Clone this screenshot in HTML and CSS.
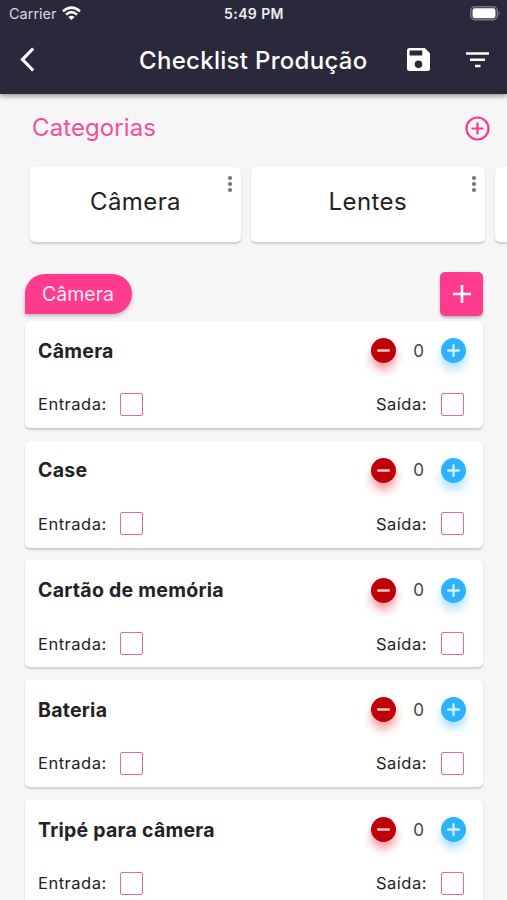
FILE: index.html
```html
<!DOCTYPE html>
<html lang="pt-BR">
<head>
<meta charset="utf-8">
<title>Checklist Produção</title>
<link rel="stylesheet" href="styles.css">
</head>
<body>
<svg class="defs" width="0" height="0">
  <symbol id="dots" viewBox="0 0 6 18"><circle cx="3" cy="3" r="2.1"/><circle cx="3" cy="9" r="2.1"/><circle cx="3" cy="15" r="2.1"/></symbol>
  <symbol id="minus" viewBox="0 0 26 26"><path d="M6.5 13H19.5"/></symbol>
  <symbol id="plus" viewBox="0 0 26 26"><path d="M6.5 13H19.5M13 6.5V19.5"/></symbol>
</svg>
<header class="header">
  <div class="status">
    <div class="carrier"><span class="carrier-name">Carrier</span>
      <svg class="wifi" width="19" height="15" viewBox="0 0 19 15" fill="none" stroke="#fff" stroke-width="2.5"><path d="M1 5.4Q9.5-2.2 18 5.4M4 8.7Q9.5 3.6 15 8.7"/><path d="M9.5 14L6.3 11Q9.5 8.3 12.7 11Z" fill="#fff" stroke="none"/></svg>
    </div>
    <span class="time">5:49 PM</span>
    <svg class="battery" width="31" height="15" viewBox="0 0 31 15"><rect x=".75" y=".75" width="26.5" height="13" rx="4" fill="none" stroke="#777784" stroke-width="1.5"/><rect x="2.5" y="2.3" width="23" height="10" rx="2.3" fill="#fff"/><path d="M28.5 5Q31 7.2 28.5 9.6Z" fill="#777784"/></svg>
  </div>
  <div class="appbar">
    <svg class="back" width="16" height="25" viewBox="0 0 16 25" fill="none" stroke="#fff" stroke-width="3.2"><path d="M14.2 1.5L3.5 12.5L14.2 23.5"/></svg>
    <h1 class="title">Checklist Produção</h1>
    <svg class="save" width="23" height="23" viewBox="0 0 23 23"><path fill="#fff" fill-rule="evenodd" d="M2.5 0H17.7L23 5.2V20.5Q23 23 20.5 23H2.5Q0 23 0 20.5V2.5Q0 0 2.5 0ZM2.6 2.6V7.6H15.3V2.6ZM11.5 12.5A3.8 3.8 0 1 0 11.5 20.1A3.8 3.8 0 1 0 11.5 12.5Z"/></svg>
    <svg class="filter" width="23" height="16" viewBox="0 0 23 16" stroke="#fff" stroke-width="2.6"><path d="M0 1.5H23M4 7.8H19M9 14H14.5"/></svg>
  </div>
</header>
<main>
  <div class="categories-head">
    <h2 class="categories-title">Categorias</h2>
    <svg width="26" height="26" viewBox="0 0 26 26" fill="none" stroke="#f83c89" stroke-width="2.2"><circle cx="13.5" cy="12.5" r="11"/><path d="M7.5 12.5H19.5M13.5 6.5V18.5"/></svg>
  </div>
  <div class="categories">
    <div class="category camera">Câmera<svg class="more"><use href="#dots"/></svg></div>
    <div class="category lenses">Lentes<svg class="more"><use href="#dots"/></svg></div>
    <div class="category partial"></div>
  </div>
  <div class="section-head">
    <div class="pill">Câmera</div>
    <div class="add"><svg width="18" height="18" viewBox="0 0 18 18" stroke="#fff" stroke-width="2.6"><path d="M0 9H18M9 0V18"/></svg></div>
  </div>
  <div class="items">
    <section class="item">
      <div class="row"><h3 class="name">Câmera</h3><svg class="round red"><use href="#minus"/></svg><span class="count">0</span><svg class="round blue"><use href="#plus"/></svg></div>
      <div class="row"><span class="label in">Entrada:</span><i class="box"></i><span class="label out">Saída:</span><i class="box"></i></div>
    </section>
    <section class="item">
      <div class="row"><h3 class="name">Case</h3><svg class="round red"><use href="#minus"/></svg><span class="count">0</span><svg class="round blue"><use href="#plus"/></svg></div>
      <div class="row"><span class="label in">Entrada:</span><i class="box"></i><span class="label out">Saída:</span><i class="box"></i></div>
    </section>
    <section class="item">
      <div class="row"><h3 class="name">Cartão de memória</h3><svg class="round red"><use href="#minus"/></svg><span class="count">0</span><svg class="round blue"><use href="#plus"/></svg></div>
      <div class="row"><span class="label in">Entrada:</span><i class="box"></i><span class="label out">Saída:</span><i class="box"></i></div>
    </section>
    <section class="item">
      <div class="row"><h3 class="name">Bateria</h3><svg class="round red"><use href="#minus"/></svg><span class="count">0</span><svg class="round blue"><use href="#plus"/></svg></div>
      <div class="row"><span class="label in">Entrada:</span><i class="box"></i><span class="label out">Saída:</span><i class="box"></i></div>
    </section>
    <section class="item">
      <div class="row"><h3 class="name">Tripé para câmera</h3><svg class="round red"><use href="#minus"/></svg><span class="count">0</span><svg class="round blue"><use href="#plus"/></svg></div>
      <div class="row"><span class="label in">Entrada:</span><i class="box"></i><span class="label out">Saída:</span><i class="box"></i></div>
    </section>
  </div>
</main>
</body>
</html>
```
FILE: styles.css
```css
* { box-sizing: border-box; margin: 0; padding: 0; }
body { width: 507px; height: 900px; overflow: hidden; background: #f6f6f6; color: #222; font-family: Inter, "Liberation Sans", sans-serif; }
svg { flex: none; display: block; }
.defs { position: absolute; }
h1, h2, h3 { font-weight: 400; white-space: nowrap; }
.header { height: 94px; background: #29293b; color: #fff; box-shadow: 0 2px 5px rgba(0,0,0,.4); }
.status { height: 27px; display: grid; grid-template-columns: 1fr auto 1fr; align-items: center; padding: 0 6px 0 9px; }
.carrier { display: flex; gap: 6px; align-items: center; }
.carrier-name { width: 47px; font-size: 14.5px; color: #d9d9df; }
.wifi { margin: -1px 0 0 0; }
.time { margin-left: -2px; font-size: 14px; font-weight: 600; letter-spacing: .4px; color: #eeeef2; }
.battery { justify-self: end; }
.appbar { height: 67px; display: flex; align-items: center; padding: 0 18px 0 19px; }
.back { margin-top: -2px; }
.title { width: 229px; margin-left: 104px; font-size: 24px; font-weight: 500; letter-spacing: .3px; line-height: 30px; }
.save { margin: -2px 0 0 39px; }
.filter { margin: -1px 0 0 36px; }
.categories-head { height: 73px; display: flex; justify-content: space-between; align-items: center; padding: 0 17px 4px 32px; }
.categories-title { margin-top: -2px; font-size: 24px; color: #f55096; letter-spacing: .1px; }
.categories { display: flex; gap: 9.5px; padding-left: 30px; }
.category { flex: none; width: 234.5px; height: 75px; display: grid; place-items: center; position: relative; padding-bottom: 6px; background: #fff; border-radius: 5px; box-shadow: 0 1.5px 2px rgba(0,0,0,.17); font-size: 24px; letter-spacing: .4px; }
.category.camera { width: 211px; }
.category.partial { flex: 1; width: auto; border-radius: 5px 0 0 5px; }
.more { position: absolute; top: 8px; right: 8.5px; width: 6px; height: 18px; fill: #747474; }
.section-head { display: flex; align-items: center; justify-content: space-between; height: 44px; margin: 30px 24px 5px 25px; }
.pill { width: 107px; height: 40px; border-radius: 20px 20px 20px 0; display: grid; place-items: center; padding-right: 1px; background: #ff3b8e; color: #ffe7f2; font-size: 19.5px; box-shadow: 0 2px 4px rgba(0,0,0,.25); }
.add { width: 43px; height: 44px; display: grid; place-items: center; background: #ff3b8e; border-radius: 5px; box-shadow: 0 2px 3px rgba(0,0,0,.25); }
.items { display: grid; gap: 12.7px; margin: 0 24px 0 25px; }
.item { height: 107px; padding: 3px 18px 0 13px; background: #fff; border-radius: 5px; box-shadow: 0 1.5px 2px rgba(0,0,0,.17); }
.row { height: 53.5px; display: flex; align-items: center; }
.name { flex: 1; font-size: 19.5px; font-weight: 650; letter-spacing: .25px; }
.round { width: 25px; height: 25px; border-radius: 50%; fill: none; stroke: #fff; stroke-width: 2.4; }
.red { background: #c00009; stroke: #ffc7c9; box-shadow: 0 7px 10px rgba(225,0,10,.38); }
.blue { margin-right: -1px; background: #2cb2ff; stroke: #d0f0ff; box-shadow: 0 7px 10px rgba(44,178,255,.38); }
.count { width: 45px; text-align: center; font-size: 17px; color: #444; }
.label { font-size: 16.5px; letter-spacing: .5px; white-space: nowrap; }
.in { width: 82px; }
.out { margin-left: auto; width: 65px; }
.box { width: 23px; height: 23px; border: 1.5px solid #f2659c; border-radius: 2px; }
.out + .box { margin-right: 1px; }
```
